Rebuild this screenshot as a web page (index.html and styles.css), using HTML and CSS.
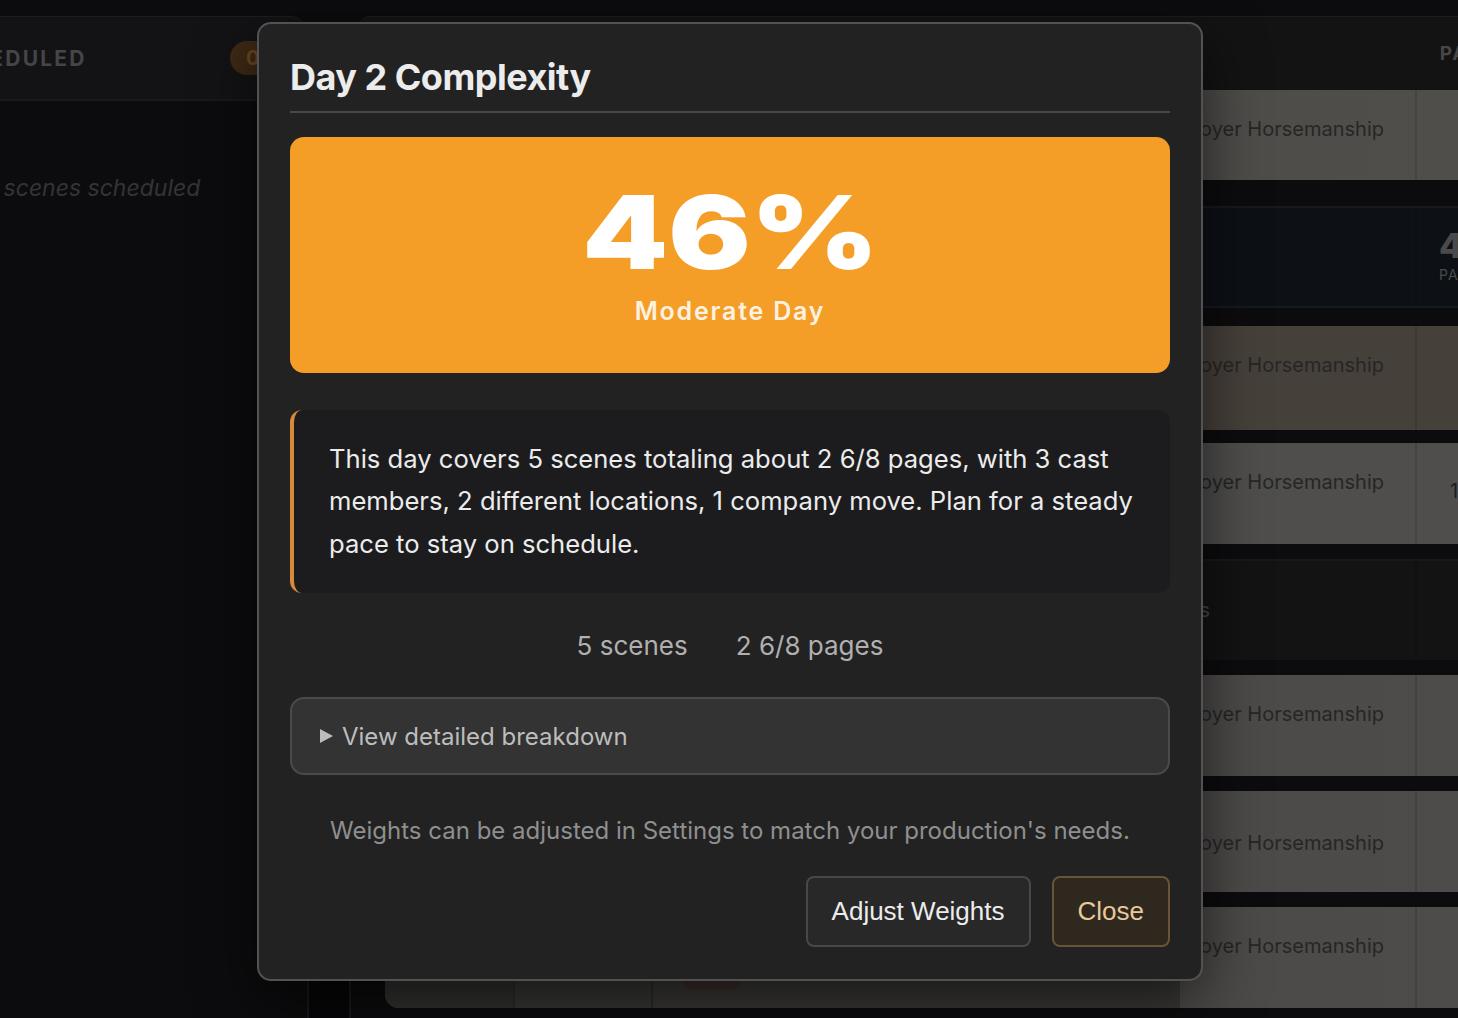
FILE: index.html
```html
<!DOCTYPE html>
<html lang="en">
<head>
<meta charset="utf-8">
<title>Day 2 Complexity</title>
<link rel="stylesheet" href="styles.css">
</head>
<body>
<div class="app">
  <aside class="side">
    <div class="side-head">
      <span class="side-title">UNSCHEDULED</span>
      <span class="badge">0</span>
    </div>
    <div class="side-body">
      <p class="empty">No scenes scheduled</p>
    </div>
  </aside>
  <div class="gutter"><div class="gutter-col"></div></div>
  <main class="board">
    <div class="board-head"><span class="col-label">PAGES</span></div>
    <div class="rows">
      <div class="row grey first">
        <div class="c1"></div><div class="c2"></div><div class="c3"></div>
        <div class="c4"><span class="name">Boyer Horsemanship</span></div>
        <div class="c5"></div>
      </div>
      <div class="row navy">
        <div class="c1"></div><div class="c2"></div><div class="c3"></div>
        <div class="c4"></div>
        <div class="c5 pages"><span class="pg-num">4</span><span class="pg-lbl">PAGES</span></div>
      </div>
      <div class="row tan">
        <div class="c1"></div><div class="c2"></div><div class="c3"></div>
        <div class="c4"><span class="name">Boyer Horsemanship</span></div>
        <div class="c5"></div>
      </div>
      <div class="row grey2">
        <div class="c1"></div><div class="c2"></div><div class="c3"></div>
        <div class="c4"><span class="name">Boyer Horsemanship</span></div>
        <div class="c5 num"><span>1</span></div>
      </div>
      <div class="row dark">
        <div class="c1"></div><div class="c2"></div><div class="c3"></div>
        <div class="c4 move"><span class="move-txt">2 company moves</span></div>
        <div class="c5"></div>
      </div>
      <div class="row grey">
        <div class="c1"></div><div class="c2"></div><div class="c3"></div>
        <div class="c4"><span class="name">Boyer Horsemanship</span></div>
        <div class="c5"></div>
      </div>
      <div class="row grey lowtext">
        <div class="c1"></div><div class="c2"></div><div class="c3"></div>
        <div class="c4"><span class="name">Boyer Horsemanship</span></div>
        <div class="c5"></div>
      </div>
      <div class="row grey last">
        <div class="c1"></div><div class="c2"></div><div class="c3"><span class="pill"></span></div>
        <div class="c4"><span class="name">Boyer Horsemanship</span></div>
        <div class="c5"></div>
      </div>
    </div>
  </main>
</div>

<div class="modal" role="dialog" aria-labelledby="mt">
  <h2 class="modal-title" id="mt">Day 2 Complexity</h2>
  <div class="score">
    <div class="score-num">46%</div>
    <div class="score-lbl">Moderate Day</div>
  </div>
  <div class="summary">
    This day covers 5 scenes totaling about 2 6/8 pages, with 3 cast members, 2 different locations, 1 company move. Plan for a steady pace to stay on schedule.
  </div>
  <div class="stats">
    <span>5 scenes</span>
    <span>2 6/8 pages</span>
  </div>
  <details class="breakdown">
    <summary><span class="tri"></span>View detailed breakdown</summary>
  </details>
  <p class="note">Weights can be adjusted in Settings to match your production's needs.</p>
  <div class="actions">
    <button class="btn btn-ghost" type="button">Adjust Weights</button>
    <button class="btn btn-close" type="button">Close</button>
  </div>
</div>
</body>
</html>
```

FILE: styles.css
```css
* { box-sizing: border-box; }

html, body {
  margin: 0;
  height: 1018px;
  overflow: hidden;
}

body {
  background: #0c0c0e;
  font-family: Inter, "Noto Sans", sans-serif;
  position: relative;
}

.app {
  display: flex;
  padding-top: 16px;
  height: 1018px;
}

/* left panel */
.side {
  width: 305px;
  flex: none;
  display: flex;
  flex-direction: column;
}
.side-head {
  height: 85px;
  background: #131315;
  border-top: 1px solid #1d1d1f;
  border-bottom: 2px solid #19191b;
  border-top-right-radius: 14px;
  display: flex;
  align-items: center;
  justify-content: space-between;
}
.side-title {
  margin-left: -97px;
  font-size: 21px;
  font-weight: 700;
  letter-spacing: 2.2px;
  color: #454547;
}
.badge {
  width: 60px;
  height: 34px;
  margin-right: 15px;
  border-radius: 17px;
  background: #3f2a14;
  color: #6a4820;
  font-size: 20px;
  font-weight: 700;
  display: flex;
  align-items: center;
  padding-left: 16px;
}
.side-body {
  flex: 1;
  background: #0c0c0e;
}
.empty {
  margin: 73px 0 0 -34px;
  font-size: 23px;
  font-style: italic;
  color: #343436;
}

/* gutter */
.gutter {
  width: 52px;
  flex: none;
  display: flex;
  flex-direction: column;
  justify-content: flex-end;
}
.gutter-col {
  height: 100px;
  margin-left: 2px;
  width: 44px;
  border-left: 2px solid #19191b;
  border-right: 2px solid #19191b;
  background: #070709;
}

/* board */
.board {
  flex: 1;
  display: flex;
  flex-direction: column;
  min-width: 0;
}
.board-head {
  height: 74px;
  background: #131313;
  border-top: 1px solid #1d1d1f;
  border-top-left-radius: 14px;
  display: flex;
  align-items: center;
  justify-content: flex-end;
  overflow: hidden;
}
.col-label {
  margin-right: -54px;
  font-size: 19px;
  font-weight: 700;
  letter-spacing: 2px;
  color: #474747;
}
.rows {
  display: flex;
  flex-direction: column;
  gap: 15px;
  padding-left: 28px;
}
.row {
  display: grid;
  grid-template-columns: 128px 140px 1fr 235px 43px;
  height: 101px;
}
.row > div { min-width: 0; }
.row .c5 { border-left: 2px solid rgba(0,0,0,0.12); }
.row.first { height: 90px; margin-bottom: 11px; }
.row.navy { height: 102px; }
.row.tan { height: 104px; margin-top: 3px; }
.row.grey2 { margin-top: -2px; }

.grey { background: linear-gradient(90deg, #474543 0%, #4d4c4a 100%); }
.grey2 { background: #4f4e4d; }
.tan { background: #46403a; }
.navy { background: #0d1116; border-top: 2px solid #151a20; border-bottom: 2px solid #151a20; }
.dark { background: #131313; border-top: 2px solid #19191a; }
.first { background: linear-gradient(90deg, #4a4845 0%, #504e4b 100%); }
.last { border-bottom-left-radius: 14px; overflow: hidden; }
.last .c1 { background: #323230; }
.last .c2 { background: #383836; border-left: 2px solid #2c2c2a; border-right: 2px solid #2c2c2a; }
.last .c3 { background: #3a3937; }

.c4 { padding: 27px 0 0 7px; }
.lowtext .c4 { padding-top: 40px; }
.name {
  font-size: 20px;
  color: #262626;
  white-space: nowrap;
}
.move { padding-top: 37px; }
.move-txt {
  display: inline-block;
  margin-left: -150px;
  font-size: 20px;
  color: #4a4a4a;
  white-space: nowrap;
}
.pill {
  display: block;
  width: 57px;
  height: 16px;
  margin: 66px 0 0 30px;
  border-radius: 6px;
  background: #3d2e2c;
}
.pages {
  display: flex;
  flex-direction: column;
  padding: 18px 0 0 22px;
  overflow: hidden;
}
.pg-num { font-size: 34px; font-weight: 800; color: #4a4a4c; line-height: 40px; }
.pg-lbl { font-size: 14px; letter-spacing: 1px; color: #4a4a4c; }
.num { padding: 36px 0 0 33px; font-size: 20px; color: #1e1e1e; }

/* modal */
.modal {
  position: absolute;
  left: 257px;
  top: 22px;
  width: 946px;
  height: 959px;
  background: #222222;
  border: 2px solid #525255;
  border-radius: 14px;
  padding: 32px 31px 32px;
  box-shadow: 0 20px 60px rgba(0,0,0,0.6);
  display: flex;
  flex-direction: column;
}
.modal-title {
  margin: 0;
  padding-bottom: 12px;
  border-bottom: 2px solid #48484c;
  font-size: 36px;
  font-weight: 700;
  line-height: 43px;
  color: #ececec;
  letter-spacing: -0.5px;
}
.score {
  margin-top: 24px;
  height: 236px;
  background: #f49d27;
  border-radius: 14px;
  padding-top: 44px;
  display: flex;
  flex-direction: column;
  align-items: center;
}
.score-num {
  font-size: 102px;
  line-height: 102px;
  font-weight: 900;
  color: #ffffff;
  transform: scaleX(1.2);
}
.score-lbl {
  margin-top: 13px;
  font-size: 25px;
  line-height: 30px;
  font-weight: 600;
  letter-spacing: 1.8px;
  color: #fdf1e0;
}
.summary {
  margin-top: 37px;
  background: #1c1c1f;
  border-left: 4px solid #d58b3b;
  border-radius: 12px;
  padding: 28px 28px 28px 35px;
  font-size: 25.6px;
  line-height: 42.5px;
  color: #ececec;
}
.stats {
  margin-top: 33px;
  display: flex;
  justify-content: center;
  gap: 48px;
  font-size: 26px;
  line-height: 39px;
  color: #b0b0b0;
}
.breakdown {
  margin-top: 32px;
  background: #333333;
  border: 2px solid #4a4a4c;
  border-radius: 14px;
}
.breakdown summary {
  list-style: none;
  height: 74px;
  display: flex;
  align-items: center;
  padding-left: 28px;
  font-size: 24px;
  color: #bdbdbd;
  cursor: pointer;
}
.breakdown summary::-webkit-details-marker { display: none; }
.tri {
  width: 0;
  height: 0;
  border-top: 7.5px solid transparent;
  border-bottom: 7.5px solid transparent;
  border-left: 13px solid #bdbdbd;
  margin-right: 9px;
}
.note {
  margin: 39px 0 0;
  text-align: center;
  font-size: 24px;
  line-height: 34px;
  color: #8f8f8f;
}
.actions {
  margin-top: 28px;
  display: flex;
  justify-content: flex-end;
  gap: 21px;
}
.btn {
  height: 71px;
  border-radius: 8px;
  font-family: "Liberation Sans", Arial, sans-serif;
  font-size: 26px;
  padding: 0 24px;
  cursor: pointer;
}
.btn-ghost {
  background: #282828;
  border: 2px solid #48484c;
  color: #ececec;
}
.btn-close {
  background: #2f281f;
  border: 2px solid #6b5335;
  color: #e8c99a;
}
```
